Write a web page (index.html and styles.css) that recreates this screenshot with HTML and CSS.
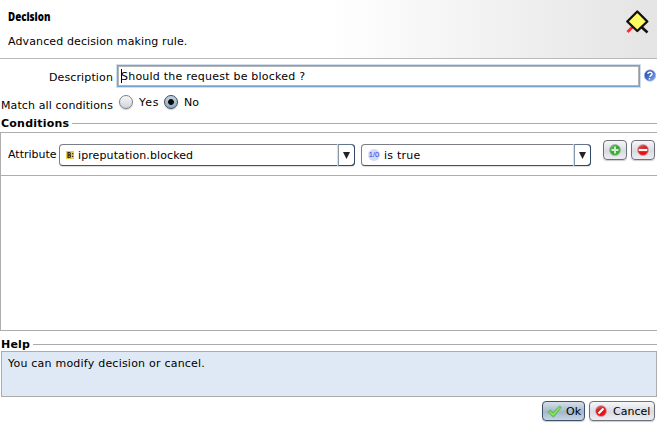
FILE: index.html
```html
<!DOCTYPE html>
<html lang="en">
<head>
<meta charset="utf-8">
<title>Decision</title>
<link rel="stylesheet" href="styles.css">
</head>
<body>
<header class="header">
  <div class="heading">
    <h1 class="title">Decision</h1>
    <p class="subtitle">Advanced decision making rule.</p>
  </div>
  <svg class="logo" width="26" height="26" viewBox="0 0 26 26" fill="none">
    <path d="M8.500 18 3.500 23" stroke="#fa2828" stroke-width="2.600"/>
    <path d="M17.500 18 23.500 23.500" stroke="#111" stroke-width="2.600"/>
    <path d="M13.300 2.500 23.300 12.500 13.300 22 3.300 12.500Z" fill="#fffa62" stroke="#111" stroke-width="2.400" stroke-linejoin="round"/>
  </svg>
</header>
<main>
  <div class="description">
    <label class="label t-desc">Description</label>
    <div class="field"><span class="caret"></span><span class="t-value">Should the request be blocked ?</span></div>
    <svg class="help-icon" width="12" height="13" viewBox="0 0 12 13">
      <defs><linearGradient id="blue" x2="1" y2="1"><stop stop-color="#1c49a8"/><stop offset=".5" stop-color="#416fd0"/><stop offset="1" stop-color="#8fb6fa"/></linearGradient></defs>
      <circle cx="6" cy="6.500" r="5.700" fill="url(#blue)" stroke="#a9b8d6" stroke-width=".7"/>
      <path d="M3.700 4.800C4.200 2.400 8.400 2.900 8 5 7.700 6.400 6 6.300 5.800 7.900M5.500 8.900v1.500" fill="none" stroke="#fff" stroke-width="1.500"/>
    </svg>
  </div>
  <div class="match">
    <span class="label t-match">Match all conditions</span>
    <span class="radio"></span><span class="yes">Yes</span>
    <span class="radio radio-on"></span><span class="no">No</span>
  </div>
  <section>
    <h2 class="section-title"><span class="t-cond">Conditions</span></h2>
    <div class="conditions">
      <div class="row">
        <span class="attribute">Attribute</span>
        <div class="combo combo-attr">
          <svg class="type-icon" width="8" height="8" viewBox="0 0 9 9">
            <path fill="#e8ca50" d="M0 0h9v9H0z"/>
            <path fill="none" stroke="#222" stroke-width="1.300" d="M2.300 1.700v5.600h1.300c2 0 2-2.700 0-2.700H2.300h1.200c1.800 0 1.800-2.900 0-2.900zM7.500 2.200v1.500M7.500 5.300v1.500"/>
          </svg>
          <span class="combo-text t-ip">ipreputation.blocked</span>
          <span class="arrow"><svg width="7" height="7"><path d="M0 0h7L3.500 7Z" fill="#222"/></svg></span>
        </div>
        <div class="combo combo-value">
          <span class="bool-icon"><span class="bool-text">1/0</span></span>
          <span class="combo-text t-true">is true</span>
          <span class="arrow"><svg width="7" height="7"><path d="M0 0h7L3.500 7Z" fill="#222"/></svg></span>
        </div>
        <button class="button square add" aria-label="Add">
          <svg width="12" height="12" viewBox="0 0 12 12">
            <defs><linearGradient id="green" x2="1" y2="1"><stop stop-color="#72bd72"/><stop offset=".5" stop-color="#36a33a"/><stop offset="1" stop-color="#2bd018"/></linearGradient></defs>
            <circle cx="6" cy="6" r="5.500" fill="url(#green)" stroke="#a4b8a5" stroke-width=".8"/>
            <path d="M6 2.500v7M2.500 6h7" stroke="#d3edd3" stroke-width="1.900"/>
          </svg>
        </button>
        <button class="button square" aria-label="Remove">
          <svg width="12" height="12" viewBox="0 0 12 12">
            <defs><linearGradient id="red" x2=".4" y2="1"><stop stop-color="#d88888"/><stop offset=".45" stop-color="#d91e23"/><stop offset="1" stop-color="#f20d0d"/></linearGradient></defs>
            <circle cx="6" cy="6" r="5.500" fill="url(#red)" stroke="#c8a9ad" stroke-width=".8"/>
            <path d="M1.700 6h8.600" stroke="#fff" stroke-width="2.200"/>
          </svg>
        </button>
      </div>
    </div>
  </section>
  <section>
    <h2 class="section-title help-title"><span class="t-help">Help</span></h2>
    <div class="help"><span class="t-msg">You can modify decision or cancel.</span></div>
  </section>
</main>
<footer class="footer">
  <button class="button ok">
    <svg width="15" height="13" viewBox="0 0 15 13"><path d="M.7 7 3.500 4.800 6 7.500 12.500 1 14.300 2.200 6.500 12.300Z" fill="#62d348" stroke="#6cae62" stroke-width=".8"/><path d="M2.700 7 6 10 12.800 2.500" fill="none" stroke="#a5f48c" stroke-width=".8"/></svg>
    <span class="t-ok">Ok</span>
  </button>
  <button class="button cancel">
    <svg width="12" height="12" viewBox="0 0 12 12"><circle cx="6" cy="6" r="5.500" fill="url(#red)" stroke="#c8a9ad" stroke-width=".8"/><path d="M3.500 8.500 8.500 3.500" stroke="#fff" stroke-width="2.200"/></svg>
    <span class="t-cancel">Cancel</span>
  </button>
</footer>
</body>
</html>
```
FILE: styles.css
```css
* { box-sizing: border-box; }
body { margin: 0; height: 426px; overflow: hidden; background: #fff; color: #000; font: 11px/14px "DejaVu Sans", sans-serif; }
h1, h2, p { margin: 0; font-size: inherit; }
svg { display: block; flex: none; }
span { white-space: nowrap; }
.header { height: 59px; border-bottom: 1px solid #b9b9b9; background: linear-gradient(90deg, #fff 50%, #e4e4e4 100%); display: flex; justify-content: space-between; padding: 10px 7px 0 8px; }
.title { font: 800 12px/14px "Open Sans", sans-serif; transform: scaleX(.81); transform-origin: left; }
.subtitle { margin-top: 11px; letter-spacing: .12px; }
.logo { margin-top: -1px; }
.description { display: flex; height: 29px; padding-top: 5px; }
.label { width: 113px; text-align: right; flex: none; }
.description .label { padding-top: 7px; }
.t-desc { letter-spacing: .13px; }
.t-match { letter-spacing: .1px; }
.field { width: 525px; height: 24px; margin-left: 3px; border: 2px solid #76a2d0; outline: 1px solid #d0e0f0; outline-offset: -1px; box-shadow: inset 0 0 0 1px #b5b5b5; display: flex; padding: 3px; }
.t-value { margin-top: 1px; letter-spacing: .23px; }
.caret { width: 1px; height: 14px; background: #000; margin-right: -1px; }
.help-icon { margin: 5px 0 0 3px; }
.match { display: flex; height: 28px; padding-top: 7px; }
.match .label { padding-top: 4px; }
.radio { width: 14px; height: 14px; border: 1px solid #7d8087; border-radius: 50%; margin-left: 6px; background: linear-gradient(#f8f8fa, #d0d2da); box-shadow: 0 1px 1px #ccc; }
.radio-on { border-color: #384b60; background: radial-gradient(circle, #080a0e 0 2.500px, transparent 3.300px), linear-gradient(#c5d2df, #91a8bf); }
.yes { width: 21px; margin: 1px 0 0 6px; letter-spacing: .9px; }
.radio-on { margin-left: 4px; }
.no { margin: 1px 0 0 6px; }
.section-title { display: flex; align-items: center; height: 16px; padding-left: 1px; font-weight: bold; }
.section-title::after { content: ""; flex: 1; height: 1px; margin: 0 0 1px 3px; background: #a9a9af; }
.t-cond { letter-spacing: .23px; }
.t-help { letter-spacing: .2px; }
.conditions { height: 199px; border: 1px solid #adadad; border-right: 0; }
.row { height: 43px; border-bottom: 1px solid #adadad; display: flex; padding: 7px 2px 0 7px; }
.attribute { width: 51px; padding-top: 8px; }
.combo { display: flex; align-items: center; height: 22px; margin-top: 4px; border: 1px solid #7c7e87; border-bottom-color: #4a5060; border-radius: 4px; padding-left: 6px; background: #fff; box-shadow: 0 1px 1px #ddd; }
.combo-attr { width: 296px; }
.combo-value { width: 230px; margin: 4px 12px 0 6px; }
.combo-text { margin: 2px 0 0 4px; }
.t-ip { letter-spacing: .1px; }
.t-true { letter-spacing: .25px; }
.arrow { width: 17px; height: 22px; margin: -1px -1px -1px auto; border: 1px solid #304964; border-top-color: #62758a; border-left-color: #8598aa; border-radius: 0 4px 4px 0; display: flex; align-items: center; justify-content: center; box-shadow: -1px 0 1px #d9dde2; }
.bool-icon { width: 12px; height: 12px; border-radius: 50%; background: #cddcf7; display: flex; align-items: center; justify-content: center; color: #3a3ae0; }
.bool-text { font: 7.500px/12px "Liberation Sans", sans-serif; }
.button { height: 20px; border: 1px solid #6d7078; border-radius: 4px; padding: 0; display: flex; align-items: center; background: linear-gradient(#f7f7f9, #d9dbe1 55%, #eceef3); box-shadow: 0 1px 1px #ccc; font: inherit; color: #000; }
.square { width: 24px; justify-content: center; }
.add { margin-right: 4px; }
.help-title { margin-top: 5px; }
.help-title .t-help { margin-top: 1px; }
.help-title::after { margin-bottom: 0; }
.help { height: 46px; margin-left: 1px; padding: 5px 6px; border: 1px solid #acacac; background: #dfe9f5; margin-top: -1px; }
.t-msg { letter-spacing: .22px; }
.footer { display: flex; justify-content: flex-end; gap: 4px; padding: 4px 2px 0; }
.ok { width: 43px; padding-left: 4px; border-color: #3d5268; background: linear-gradient(#d6e0e9, #a4b7ca 55%, #c5d6e6); }
.ok span { margin: 2px 0 0 4px; }
.cancel { width: 66px; padding-left: 5px; }
.cancel span { margin: 2px 0 0 6px; }
```
